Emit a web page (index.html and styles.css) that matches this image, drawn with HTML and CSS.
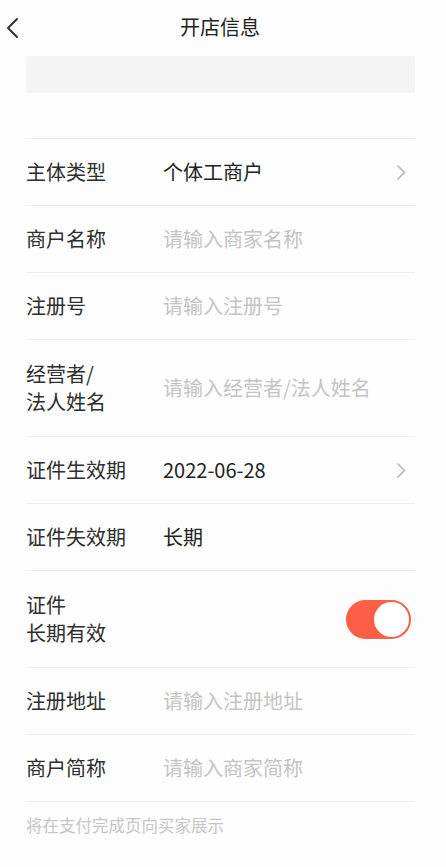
FILE: index.html
```html
<!DOCTYPE html>
<html lang="zh-CN">
<head>
<meta charset="utf-8">
<title>开店信息</title>
<link rel="stylesheet" href="styles.css">
</head>
<body>
<div class="page">
  <header class="nav">
    <span class="back">
      <svg width="14" height="22" viewBox="0 0 14 22"><path d="M12 2 L3 11 L12 20" fill="none" stroke="#333" stroke-width="2" stroke-linecap="round" stroke-linejoin="round"/></svg>
    </span>
    <h1 class="title">开店信息</h1>
  </header>
  <div class="banner"></div>
  <div class="form">
    <div class="row">
      <div class="label">主体类型</div>
      <div class="value">个体工商户</div>
      <svg class="arrow" width="11" height="17" viewBox="0 0 11 17"><path d="M2 2 L8.5 8.5 L2 15" fill="none" stroke="#b5b5b5" stroke-width="1.6" stroke-linecap="round" stroke-linejoin="round"/></svg>
    </div>
    <div class="row">
      <div class="label">商户名称</div>
      <div class="value placeholder">请输入商家名称</div>
    </div>
    <div class="row">
      <div class="label">注册号</div>
      <div class="value placeholder">请输入注册号</div>
    </div>
    <div class="row tall">
      <div class="label">经营者/<br>法人姓名</div>
      <div class="value placeholder">请输入经营者/法人姓名</div>
    </div>
    <div class="row">
      <div class="label">证件生效期</div>
      <div class="value">2022-06-28</div>
      <svg class="arrow" width="11" height="17" viewBox="0 0 11 17"><path d="M2 2 L8.5 8.5 L2 15" fill="none" stroke="#b5b5b5" stroke-width="1.6" stroke-linecap="round" stroke-linejoin="round"/></svg>
    </div>
    <div class="row">
      <div class="label">证件失效期</div>
      <div class="value">长期</div>
    </div>
    <div class="row tall">
      <div class="label">证件<br>长期有效</div>
      <div class="value"></div>
      <div class="switch"><span class="knob"></span></div>
    </div>
    <div class="row">
      <div class="label">注册地址</div>
      <div class="value placeholder">请输入注册地址</div>
    </div>
    <div class="row last">
      <div class="label">商户简称</div>
      <div class="value placeholder">请输入商家简称</div>
    </div>
  </div>
  <p class="note">将在支付完成页向买家展示</p>
</div>
</body>
</html>
```

FILE: styles.css
```css
html, body {
  margin: 0;
  padding: 0;
  background: #fdfdfd;
}
body {
  font-family: "Noto Sans CJK SC", "Noto Sans", sans-serif;
  color: #2a2a2a;
}
.page {
  width: 446px;
  min-height: 867px;
}
.nav {
  height: 54px;
  display: flex;
  align-items: center;
  justify-content: center;
  position: relative;
}
.back {
  position: absolute;
  left: 5px;
  top: 17px;
  width: 14px;
  height: 22px;
}
.back svg { display: block; }
.title {
  margin: 0;
  font-size: 20px;
  font-weight: 400;
  color: #222;
  line-height: 28px;
  margin-left: -6px;
}
.banner {
  margin: 2px 31px 0 26px;
  height: 37px;
  background: #f4f4f4;
  border-radius: 2px;
}
.form {
  margin: 45px 31px 0 26px;
  border-top: 1px solid #eeeeee;
}
.row {
  display: flex;
  align-items: center;
  min-height: 66px;
  border-bottom: 1px solid #eeeeee;
  font-size: 20px;
  line-height: 28px;
}
.row.tall {
  min-height: 96px;
}
.label {
  width: 137px;
  flex: none;
  color: #2e2e2e;
}
.value {
  flex: 1;
  color: #222;
}
.placeholder {
  color: #c4c4c4;
}
.arrow {
  flex: none;
  margin-right: 8px;
  display: block;
}
.switch {
  flex: none;
  width: 65px;
  height: 39px;
  border-radius: 20px;
  background: #fd5f46;
  position: relative;
  margin-right: 4px;
}
.knob {
  position: absolute;
  right: 2px;
  top: 2px;
  width: 35px;
  height: 35px;
  border-radius: 50%;
  background: #fff;
}
.note {
  margin: 11px 0 0 26px;
  font-size: 16.5px;
  line-height: 24px;
  color: #c6c6c6;
}
```
